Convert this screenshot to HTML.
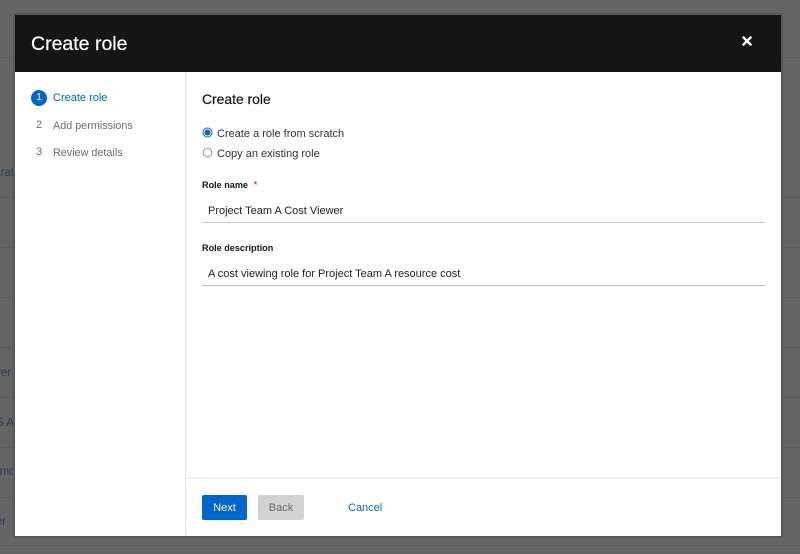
<!DOCTYPE html>
<html><head><meta charset="utf-8">
<style>
html,body{margin:0;padding:0}
body{width:800px;height:554px;position:relative;overflow:hidden;background:#646464;font-family:"Liberation Sans",sans-serif;color:#151515}
.a{position:absolute;white-space:nowrap}
.l{position:absolute;height:1px;background:#5a5a5a;left:0;width:800px}
.bg{color:#2c3c55;font-size:11.5px}
.s{font-size:11px;line-height:14px}
</style></head><body>
<div class="l" style="top:57px"></div>
<div class="l" style="top:197px"></div>
<div class="l" style="top:247px"></div>
<div class="l" style="top:297px"></div>
<div class="l" style="top:347px"></div>
<div class="l" style="top:397px"></div>
<div class="l" style="top:447px"></div>
<div class="l" style="top:497px"></div>
<div class="l" style="top:545px"></div>
<div class="a bg" style="right:786px;top:167px">trat</div>
<div class="a bg" style="right:789px;top:367px">ver</div>
<div class="a bg" style="right:786px;top:417px">WS A</div>
<div class="a bg" style="right:785px;top:466px">mc</div>
<div class="a bg" style="right:794px;top:516px">er</div>
<div class="a" style="left:13px;top:13px;width:770px;height:525px;background:#575757"></div>
<div class="a" style="left:15px;top:15px;width:766px;height:521px;background:#fff"></div>
<div class="a" style="left:15px;top:15px;width:766px;height:57px;background:#151515"></div>
<div class="a" style="left:31px;top:32px;font-size:19.5px;line-height:24px;color:#fff;-webkit-text-stroke:.2px #fff">Create role</div>
<svg class="a" style="left:741px;top:36px" width="12" height="12" viewBox="0 0 12 12"><path d="M2.5 1.5L9.5 8.5M9.5 1.5L2.5 8.5" stroke="#fff" stroke-width="2.3" stroke-linecap="square"/></svg>
<div class="a" style="left:185px;top:72px;width:1px;height:464px;background:#e4e4e4"></div>
<div class="a" style="left:31px;top:90px;width:16px;height:16px;border-radius:50%;background:#06c;color:#fff;font-size:10px;line-height:16px;text-align:center">1</div>
<div class="a s" style="left:53px;top:91px;color:#06c">Create role</div>
<div class="a" style="left:31px;top:118px;width:16px;color:#6a6e73;font-size:11px;line-height:14px;text-align:center">2</div>
<div class="a s" style="left:53px;top:119px;font-size:10.8px;color:#6a6e73">Add permissions</div>
<div class="a" style="left:31px;top:145px;width:16px;color:#6a6e73;font-size:11px;line-height:14px;text-align:center">3</div>
<div class="a s" style="left:53px;top:146px;font-size:10.8px;color:#6a6e73">Review details</div>
<div class="a" style="left:202px;top:91px;font-size:13.9px;line-height:17px;color:#151515;-webkit-text-stroke:.2px #151515">Create role</div>
<svg class="a" style="left:202px;top:127px" width="11" height="32" viewBox="0 0 11 32"><circle cx="5.5" cy="5.5" r="4.5" fill="#fff" stroke="#06c"/><circle cx="5.5" cy="5.5" r="3" fill="#06c"/><circle cx="5.5" cy="25.5" r="4.3" fill="#fff" stroke="#8a8d90" stroke-width=".9"/></svg>
<div class="a s" style="left:217px;top:127px;color:#333">Create a role from scratch</div>
<div class="a s" style="left:217px;top:147px;color:#333">Copy an existing role</div>
<div class="a" style="left:202px;top:179px;font-size:9.1px;line-height:12px;font-weight:bold">Role name <span style="color:#c9190b;font-weight:normal;font-size:10px;margin-left:3px">*</span></div>
<div class="a" style="left:202px;top:198px;width:563px;height:24px;background:#fff;border-bottom:1px solid #c8c8c8"></div>
<div class="a s" style="left:208px;top:204px;color:#222">Project Team A Cost Viewer</div>
<div class="a" style="left:202px;top:242px;font-size:9.1px;line-height:12px;font-weight:bold">Role description</div>
<div class="a" style="left:202px;top:261px;width:563px;height:24px;background:#fff;border-bottom:1px solid #b8bbbe"></div>
<div class="a s" style="left:208px;top:267px;color:#222">A cost viewing role for Project Team A resource cost</div>
<div class="a" style="left:186px;top:477px;width:595px;height:2px;background:#f0f0f0"></div>
<div class="a" style="left:202px;top:495px;width:45px;height:25px;border-radius:2px;background:#06c;color:#fff;font-size:11px;line-height:26px;text-align:center">Next</div>
<div class="a" style="left:258px;top:495px;width:46px;height:25px;border-radius:2px;background:#d2d2d2;color:#6a6e73;font-size:11px;line-height:26px;text-align:center">Back</div>
<div class="a s" style="left:348px;top:501px;color:#06c">Cancel</div>
</body></html>
